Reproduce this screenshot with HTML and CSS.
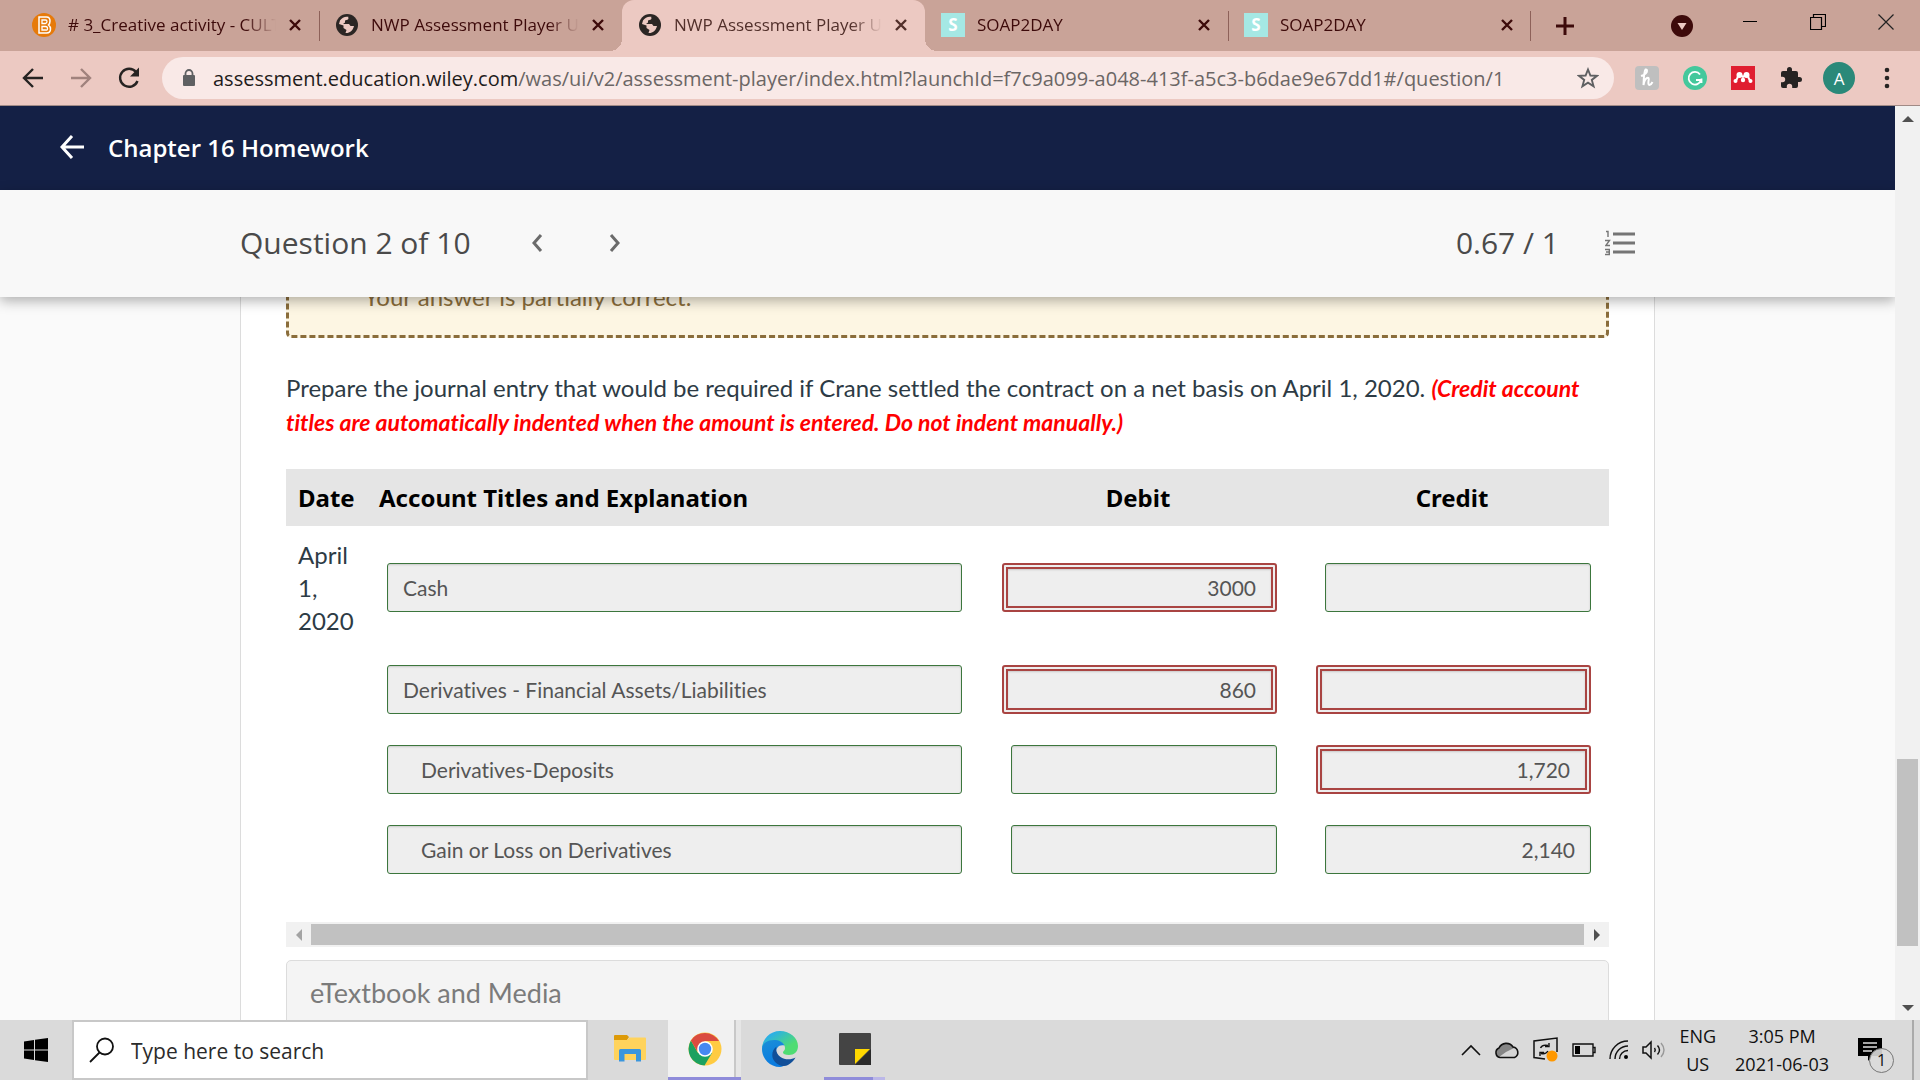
FILE: index.html
```html
<!DOCTYPE html>
<html lang="en">

<head>
    <meta charset="UTF-8">
    <meta name="viewport" content="width=device-width, initial-scale=1.0">
    <title>NWP Assessment Player UI</title>
    <link rel="stylesheet" href="styles.css">
</head>

<body>
    <svg class="defs" width="0" height="0" aria-hidden="true">
        <symbol id="globe" viewBox="0 0 22 22">
            <circle cx="11" cy="11" r="11" fill="#2b2624"/>
            <path d="M4 6.500C6 3 10 2 13 3l-1 2.500-3 1v2l-2 1.500h6l1.500 2h3.500c-1 5-5 7.500-8.500 7l1-3-3-2v-2.500L3 10z" fill="#ecc9c2"/>
            <path d="M12 3.500l2 1.500v3h4l1.500 2c0-4-3-7-6-7.500z" fill="#2b2624"/>
        </symbol>
        <symbol id="cross" viewBox="0 0 14 14">
            <path d="M2 2l10 10M12 2L2 12" stroke="currentColor" stroke-width="2.400" fill="none"/>
        </symbol>
    </svg>

    <header class="browser">
        <div class="tabs">
            <div class="tab">
                <svg class="favicon" viewBox="0 0 24 24"><circle cx="12" cy="12" r="12" fill="#e67a0a"/><path d="M7 4h7.500q3.500 0 3.500 4 0 2.500-1.500 4 2 1.500 2 4 0 4-4 4H7z" fill="none" stroke="#fff" stroke-width="1.500"/><path d="M10 7h3.500q1.500 0 1.500 1.500T13.500 10.500H10zM10 13.500h3.500q2 0 2 2t-2 1.500H10z" fill="none" stroke="#fff" stroke-width="1.300"/></svg>
                <span class="tab-title"># 3_Creative activity - CULT</span>
                <button class="tab-close" aria-label="Close tab"><svg><use href="#cross"/></svg></button>
            </div>
            <div class="tab divided before-active">
                <svg class="favicon globe"><use href="#globe"/></svg>
                <span class="tab-title">NWP Assessment Player UI</span>
                <button class="tab-close" aria-label="Close tab"><svg><use href="#cross"/></svg></button>
            </div>
            <div class="tab active">
                <svg class="favicon globe"><use href="#globe"/></svg>
                <span class="tab-title">NWP Assessment Player UI</span>
                <button class="tab-close" aria-label="Close tab"><svg><use href="#cross"/></svg></button>
            </div>
            <div class="tab after-active">
                <span class="favicon soap">S</span>
                <span class="tab-title">SOAP2DAY</span>
                <button class="tab-close" aria-label="Close tab"><svg><use href="#cross"/></svg></button>
            </div>
            <div class="tab divided last">
                <span class="favicon soap">S</span>
                <span class="tab-title">SOAP2DAY</span>
                <button class="tab-close" aria-label="Close tab"><svg><use href="#cross"/></svg></button>
            </div>
            <button class="new-tab" aria-label="New tab"><svg width="20" height="20" viewBox="0 0 20 20"><path d="M10 1v18M1 10h18" stroke="currentColor" stroke-width="3"/></svg></button>
            <div class="window-buttons">
                <button aria-label="Search tabs"><svg width="22" height="22" viewBox="0 0 22 22"><circle cx="11" cy="11" r="11" fill="#3d0a0a"/><path d="M6.500 8h9L11 15z" fill="#ecc9c2"/></svg></button>
                <button aria-label="Minimize"><svg width="16" height="16" viewBox="0 0 16 16"><path d="M1 7.500h14" stroke="#000"/></svg></button>
                <button aria-label="Restore"><svg width="16" height="16" viewBox="0 0 16 16"><path d="M.5 3.500h11v12H.5zM3.500 3.500v-3h12v12h-4" fill="none" stroke="#000" stroke-width="1.200"/></svg></button>
                <button aria-label="Close window"><svg width="16" height="16" viewBox="0 0 16 16"><path d="M.5.5l15 15M15.500.5l-15 15" stroke="#222" stroke-width="1.200"/></svg></button>
            </div>
        </div>

        <div class="toolbar">
            <button aria-label="Back"><svg width="24" height="24" viewBox="0 0 24 24"><path d="M22 12H4M12 3l-9 9 9 9" fill="none" stroke="#262322" stroke-width="2.400"/></svg></button>
            <button aria-label="Forward"><svg width="24" height="24" viewBox="0 0 24 24"><path d="M2 12h18M12 3l9 9-9 9" fill="none" stroke="#a0827d" stroke-width="2.400"/></svg></button>
            <button aria-label="Reload"><svg width="24" height="24" viewBox="0 0 24 24"><path d="M20.500 15A9 9 0 1 1 19 6" fill="none" stroke="#262322" stroke-width="2.400"/><path d="M22 1.500v9h-9z" fill="#262322"/></svg></button>
            <div class="omnibox">
                <svg width="14" height="18" viewBox="0 0 14 18"><path d="M3.500 7V4.500a3.500 3.500 0 0 1 7 0V7" fill="none" stroke="#5f6062" stroke-width="1.800"/><rect x="1" y="6" width="12" height="11" rx="1" fill="#5f6062"/></svg>
                <p class="url"><a href="#">assessment.education.wiley.com</a>/was/ui/v2/assessment-player/index.html?launchId=f7c9a099-a048-413f-a5c3-b6dae9e67dd1#/question/1</p>
                <button aria-label="Bookmark this page"><svg width="22" height="22" viewBox="0 0 22 22"><path d="M11 2.500l2.400 6 6.600.3-5.200 4.100 1.800 6.400L11 15.700l-5.600 3.600 1.800-6.400L2 8.800l6.600-.3z" fill="none" stroke="#5f6062" stroke-width="1.900"/></svg></button>
            </div>
            <div class="extensions">
                <button class="ext honey" aria-label="Honey"><svg width="24" height="24" viewBox="0 0 24 24"><rect width="24" height="24" rx="4" fill="#bfbfbf"/><path d="M6 10q6-2 6-5 0-2-1.500-1.500Q9 5 8.500 19q1-6 3.500-7t1.500 3q-.5 4 1 4t3-3" fill="none" stroke="#fff" stroke-width="2"/></svg></button>
                <button class="ext grammarly" aria-label="Grammarly"><svg width="24" height="24" viewBox="0 0 24 24"><circle cx="12" cy="12" r="12" fill="#44c89c"/><path d="M17 8.500A6.300 6.300 0 1 0 18 14h-5M18.500 12.500V17" fill="none" stroke="#fff" stroke-width="1.800"/></svg></button>
                <button class="ext" aria-label="Mendeley"><svg width="24" height="24" viewBox="0 0 24 24"><rect width="24" height="24" fill="#e01e30"/><g fill="#fff"><circle cx="8.500" cy="9" r="3"/><circle cx="15.500" cy="9" r="3"/><circle cx="4.500" cy="15" r="2"/><circle cx="12" cy="14" r="2.200"/><circle cx="19.500" cy="15" r="2"/></g><path d="M4.500 15q2-2 2.500-5M9.500 9l2.500 2 2.500-2M17 10q.5 3 2.500 5" fill="none" stroke="#fff" stroke-width="2"/></svg></button>
                <button class="ext" aria-label="Extensions"><svg width="24" height="24" viewBox="0 0 24 24"><path d="M20.500 11H19V7a2 2 0 0 0-2-2h-4V3.500a2.500 2.500 0 0 0-5 0V5H4a2 2 0 0 0-2 2v3.800h1.500a2.700 2.700 0 0 1 0 5.400H2V20a2 2 0 0 0 2 2h3.800v-1.500a2.700 2.700 0 0 1 5.400 0V22H17a2 2 0 0 0 2-2v-4h1.500a2.500 2.500 0 0 0 0-5z" fill="#262322"/></svg></button>
                <button class="avatar" aria-label="Profile">A</button>
                <button class="ext" aria-label="Menu"><svg width="24" height="24" viewBox="0 0 24 24"><g fill="#262322"><circle cx="12" cy="4" r="2.300"/><circle cx="12" cy="12" r="2.300"/><circle cx="12" cy="20" r="2.300"/></g></svg></button>
            </div>
        </div>
    </header>

    <div class="viewport">
        <div class="app">
            <div class="course-bar">
                <a href="#" aria-label="Back to course"><svg width="24" height="24" viewBox="0 0 24 24"><path d="M24 12H3M12 1L2 12l10 11" fill="none" stroke="#fff" stroke-width="3"/></svg></a>
                <h1>Chapter 16 Homework</h1>
            </div>
            <nav class="question-bar">
                <h2>Question 2 of 10</h2>
                <button class="prev" aria-label="Previous question"><svg width="12" height="18" viewBox="0 0 12 18"><path d="M10 1L3 9l7 8" fill="none" stroke="#6b6b6b" stroke-width="3"/></svg></button>
                <button class="next" aria-label="Next question"><svg width="12" height="18" viewBox="0 0 12 18"><path d="M2 1l7 8-7 8" fill="none" stroke="#6b6b6b" stroke-width="3"/></svg></button>
                <span class="score">0.67 / 1</span>
                <button aria-label="Question list"><svg width="30" height="26" viewBox="0 0 30 26"><path d="M8 4h22M8 13h22M8 22h22" stroke="#757575" stroke-width="3"/><path d="M1 1.500h2V7M0 10.500h4.500L.8 15.500H5M0 19.500h4.300v5H0M1 22h3" fill="none" stroke="#757575" stroke-width="1.400"/></svg></button>
            </nav>

            <main class="content">
                <div class="card">
                    <div class="alert">Your answer is partially correct.</div>
                    <p class="prompt">Prepare the journal entry that would be required if Crane settled the contract on a net basis on April 1, 2020. <em>(Credit account titles are automatically indented when the amount is entered. Do not indent manually.)</em></p>

                    <table class="journal">
                        <thead>
                            <tr>
                                <th class="date">Date</th>
                                <th class="account">Account Titles and Explanation</th>
                                <th class="amount">Debit</th>
                                <th class="amount">Credit</th>
                            </tr>
                        </thead>
                        <tbody>
                            <tr>
                                <td class="date">April 1, 2020</td>
                                <td class="account"><input type="text" value="Cash" aria-label="Account 1" readonly></td>
                                <td class="amount"><input type="text" class="wrong" value="3000" aria-label="Debit 1" readonly></td>
                                <td class="amount"><input type="text" value="" aria-label="Credit 1" readonly></td>
                            </tr>
                            <tr>
                                <td class="date"></td>
                                <td class="account"><input type="text" value="Derivatives - Financial Assets/Liabilities" aria-label="Account 2" readonly></td>
                                <td class="amount"><input type="text" class="wrong" value="860" aria-label="Debit 2" readonly></td>
                                <td class="amount"><input type="text" class="wrong" value="" aria-label="Credit 2" readonly></td>
                            </tr>
                            <tr>
                                <td class="date"></td>
                                <td class="account"><input type="text" class="indent" value="Derivatives-Deposits" aria-label="Account 3" readonly></td>
                                <td class="amount"><input type="text" value="" aria-label="Debit 3" readonly></td>
                                <td class="amount"><input type="text" class="wrong" value="1,720" aria-label="Credit 3" readonly></td>
                            </tr>
                            <tr>
                                <td class="date"></td>
                                <td class="account"><input type="text" class="indent" value="Gain or Loss on Derivatives" aria-label="Account 4" readonly></td>
                                <td class="amount"><input type="text" value="" aria-label="Debit 4" readonly></td>
                                <td class="amount"><input type="text" value="2,140" aria-label="Credit 4" readonly></td>
                            </tr>
                        </tbody>
                    </table>

                    <div class="scroll-x">
                        <button aria-label="Scroll left"><svg width="6" height="12" viewBox="0 0 6 12"><path d="M6 0v12L0 6z" fill="#a3a3a3"/></svg></button>
                        <div class="thumb"></div>
                        <button aria-label="Scroll right"><svg width="6" height="12" viewBox="0 0 6 12"><path d="M0 0v12l6-6z" fill="#505050"/></svg></button>
                    </div>
                    <button class="resources">eTextbook and Media</button>
                </div>
            </main>
        </div>

        <div class="scroll-y">
            <button aria-label="Scroll up"><svg width="12" height="6" viewBox="0 0 12 6"><path d="M0 6h12L6 0z" fill="#505050"/></svg></button>
            <div class="track"><div class="thumb"></div></div>
            <button aria-label="Scroll down"><svg width="12" height="6" viewBox="0 0 12 6"><path d="M0 0h12L6 6z" fill="#505050"/></svg></button>
        </div>
    </div>

    <footer class="taskbar">
        <button class="start" aria-label="Start"><svg width="24" height="24" viewBox="0 0 24 24"><path d="M0 3.500L10 2v9.500H0zM11 1.800L24 0v11.500H11zM0 12.500h10V22L0 20.500zM11 12.500h13V24l-13-1.800z"/></svg></button>
        <label class="search">
            <svg width="26" height="26" viewBox="0 0 26 26"><circle cx="16" cy="9.500" r="8" fill="none" stroke="#111" stroke-width="1.800"/><path d="M10.500 15.500L1 25" stroke="#111" stroke-width="1.800"/></svg>
            <input type="text" placeholder="Type here to search" aria-label="Search">
        </label>
        <div class="apps">
            <button aria-label="File Explorer"><svg width="32" height="27" viewBox="0 0 32 27"><path d="M0 1q0-1 1-1h12l2 2-2 3H0z" fill="#dd9a08"/><path d="M0 5h13l2.500-2.500H31q1 0 1 1V24q0 1-1 1H1q-1 0-1-1z" fill="#ffd35c"/><path d="M5 26.500V15.500q0-1.500 1.500-1.500h19q1.500 0 1.500 1.500v11h-5V19H10.500v7.500z" fill="#3a96dd"/></svg></button>
            <button class="current" aria-label="Google Chrome"><svg width="34" height="34" viewBox="0 0 34 34"><circle cx="17" cy="17" r="16.500" fill="#ffcb42"/><path d="M2.900 8.500A16.500 16.500 0 0 0 16.500 33.500L24 21l-7-4-7 4z" fill="#1ba160"/><path d="M17 9h14L24 20z" fill="#ffcb42"/><path d="M2.900 8.500A16.500 16.500 0 0 1 31 9H17L9 19z" fill="#da4b40"/><circle cx="17" cy="17" r="7.800" fill="#fff"/><circle cx="17" cy="17" r="6.200" fill="#4688f1"/></svg></button>
            <button aria-label="Microsoft Edge"><svg width="36" height="36" viewBox="0 0 36 36">
                <defs><linearGradient id="edge-top" x1="0" y1="0" x2="1" y2="1"><stop offset="0.200" stop-color="#2bb0e6"/><stop offset="0.700" stop-color="#4fdc73"/></linearGradient><linearGradient id="edge-side" x1="0" y1="0" x2="0.300" y2="1"><stop offset="0" stop-color="#1b8fd8"/><stop offset="1" stop-color="#0a7be0"/></linearGradient></defs>
                <path d="M0 18C0 8 8 0 18 0s18 7 18 15c0 6-4 9-9 9-4 0-6-1-6-2.500S23 20 23 17c0-4-4-7-9-7C7 10 1 13 0 18z" fill="url(#edge-top)"/>
                <path d="M0 18c0-6 6-9 12-9 5 0 9 2 10.500 5.500C17 13 14 17 14 21c0 7 6 11 10 12-2 2-4 3-6 3C8 36 0 28 0 18z" fill="url(#edge-side)"/>
                <path d="M14.500 15.500C10 19 9 25 12 29.500c3 5 10 7 14 4.500 3-1.500 6-4.500 7.500-7.500-4 2.500-11 2.500-15-.5-4-3-5-7-4-10.500z" fill="#114f99"/>
            </svg></button>
            <button class="open" aria-label="Sticky Notes"><svg width="32" height="32" viewBox="0 0 32 32"><rect width="32" height="32" rx="1" fill="#444"/><path d="M32 16v16H16z" fill="#2a2a2a"/><path d="M16 16h15L16 31z" fill="#ffd800"/></svg></button>
        </div>
        <div class="tray">
            <svg width="20" height="12" viewBox="0 0 20 12"><path d="M1 11l9-9 9 9" fill="none" stroke="#111" stroke-width="1.600"/></svg>
            <svg width="26" height="18" viewBox="0 0 26 18"><path d="M6 16.500a5 5 0 0 1-1-9.500 8 8 0 0 1 14-1 5.500 5.500 0 0 1 1.500 10.500z" fill="#d5d5d5"/><path d="M2 14q0-6 3-7a8 8 0 0 1 14-1l2 .5L12 11l-7 5z" fill="#858585"/><path d="M6 16.500a5 5 0 0 1-1-9.500 8 8 0 0 1 14-1 5.500 5.500 0 0 1 1.500 10.500z" fill="none" stroke="#111" stroke-width="1.600"/></svg>
            <svg width="26" height="26" viewBox="0 0 26 26"><path d="M12 22L1 20.500V4l23-3v14" fill="none" stroke="#111" stroke-width="1.500"/><path d="M7.500 11q2-4 7.500-2.500M16 6v3.500h-4M15 14q-2 3.500-7 2.500M7 19v-3.500h4" fill="none" stroke="#111" stroke-width="1.400"/><circle cx="19" cy="19" r="5.500" fill="#ff9800"/></svg>
            <svg width="24" height="14" viewBox="0 0 24 14"><path d="M1 1h20v12H1zM21.500 4.500h1.500v5h-1.500" fill="none" stroke="#111" stroke-width="1.400"/><path d="M3 3h5v8H3z"/></svg>
            <svg width="20" height="20" viewBox="0 0 20 20"><g fill="none" stroke="#111" stroke-width="1.400"><path d="M1 19A18 18 0 0 1 19 1M6 19A13 13 0 0 1 19 6M10.500 19A8.500 8.500 0 0 1 19 10.500"/></g><circle cx="17" cy="17" r="2"/></svg>
            <svg width="24" height="20" viewBox="0 0 24 20"><path d="M1 7v6h3l5 5V2L4 7z" fill="none" stroke="#111" stroke-width="1.500"/><path d="M12.500 8q1.500 2 0 4M15.500 5.500q4 4.500 0 9" fill="none" stroke="#111" stroke-width="1.400"/><path d="M19 3q6 7 0 14" fill="none" stroke="#999" stroke-width="1.400"/></svg>
            <span class="language">ENG<br>US</span>
            <span class="clock">3:05 PM<br>2021-06-03</span>
            <button class="notifications" aria-label="Notifications"><svg width="24" height="24" viewBox="0 0 24 24"><path d="M0 0h24v18H14l-4 5v-5H0z"/><path d="M5 5h14M5 9h14M5 13h9" stroke="#ddd" stroke-width="1.300"/></svg><span class="badge">1</span></button>
        </div>
        <button class="show-desktop" aria-label="Show desktop"></button>
    </footer>
</body>

</html>
```
FILE: styles.css
```css
* {
    box-sizing: border-box;
}

body {
    display: flex;
    flex-direction: column;
    height: 100vh;
    margin: 0;
    overflow: hidden;
    font-family: "Open Sans", "Noto Sans", sans-serif;
    background-color: #fafafa;
}

h1,
h2,
p {
    margin: 0;
}

button {
    display: flex;
    align-items: center;
    justify-content: center;
    flex-shrink: 0;
    padding: 0;
    border: none;
    background: none;
    font-family: inherit;
    color: inherit;
}

svg {
    display: block;
    flex-shrink: 0;
}

.defs {
    position: absolute;
}

/* browser frame */

.browser {
    flex-shrink: 0;
    border-bottom: 1px solid #a08a86;
    background-color: #ecc9c2;
}

.tabs {
    display: flex;
    height: 51px;
    padding-left: 16px;
    background-color: #c9a398;
    color: #3d0a0a;
}

.tab {
    display: flex;
    align-items: center;
    flex: 0 1 303px;
    min-width: 0;
    padding: 0 17px 2px 16px;
    font-size: 17px;
}

.tab.divided {
    background: linear-gradient(#8d6159, #8d6159) no-repeat 0 11px / 1px 30px;
}

.tab.last {
    background: linear-gradient(#8d6159, #8d6159) no-repeat 0 11px / 1px 30px, linear-gradient(#8d6159, #8d6159) no-repeat 100% 11px / 1px 30px;
}

.tab.active {
    border-radius: 12px 12px 0 0;
    background-color: #ecc9c2;
    color: #52302b;
}

.tab.before-active,
.tab.after-active {
    position: relative;
}

/* flared feet of the active tab */
.tab.before-active::after,
.tab.after-active::before {
    content: "";
    position: absolute;
    bottom: 0;
    width: 12px;
    height: 12px;
}

.tab.before-active::after {
    right: 0;
    background: radial-gradient(circle at 0 0, #c9a398 12px, #ecc9c2 12px);
}

.tab.after-active::before {
    left: 0;
    background: radial-gradient(circle at 100% 0, #c9a398 12px, #ecc9c2 12px);
}

.favicon {
    flex-shrink: 0;
    width: 24px;
    height: 24px;
    margin-right: 12px;
}

.favicon.globe {
    padding: 1px;
}

.soap {
    background-color: #a5e8e4;
    color: #fff;
    font-weight: 700;
    line-height: 24px;
    text-align: center;
}

.tab-title {
    flex: 1;
    overflow: hidden;
    white-space: nowrap;
    -webkit-mask-image: linear-gradient(90deg, #000 85%, transparent);
    mask-image: linear-gradient(90deg, #000 85%, transparent);
}

.tab-close {
    margin-left: 12px;
}

.tab-close svg {
    width: 14px;
    height: 14px;
}

.new-tab {
    margin-left: 24px;
}

.window-buttons {
    display: flex;
    margin-left: auto;
}

.window-buttons button {
    width: 68px;
    padding-bottom: 8px;
}

.window-buttons button:first-child {
    padding: 0;
}

.toolbar {
    display: flex;
    align-items: center;
    height: 54px;
    padding: 0 21px;
    gap: 24px;
}

.omnibox {
    display: flex;
    align-items: center;
    flex: 1;
    min-width: 0;
    height: 42px;
    margin: 0 -3px;
    padding: 0 15px 0 20px;
    border-radius: 21px;
    background-color: #f9e9e7;
}

.url {
    flex: 1;
    margin-left: 17px;
    overflow: hidden;
    font-size: 20px;
    white-space: nowrap;
    color: #6b6665;
}

.url a {
    color: #1f1c1b;
    text-decoration: none;
}

.extensions {
    display: flex;
    align-items: center;
    gap: 24px;
}

.avatar {
    width: 32px;
    height: 32px;
    margin: 0 -4px;
    border-radius: 50%;
    background-color: #2a8979;
    color: #fff;
    font-size: 17px;
}

/* assessment player */

.viewport {
    display: flex;
    flex: 1;
    min-height: 0;
}

.app {
    display: flex;
    flex-direction: column;
    flex: 1;
    min-width: 0;
    overflow: hidden;
}

.course-bar {
    display: flex;
    align-items: center;
    flex-shrink: 0;
    gap: 24px;
    height: 84px;
    padding: 0 60px 2px;
    background-color: #142045;
    color: #fff;
}

.course-bar h1 {
    font-size: 24px;
    font-weight: 600;
}

.question-bar {
    position: relative;
    z-index: 1;
    display: flex;
    align-items: center;
    flex-shrink: 0;
    height: 107px;
    padding: 0 260px 2px 240px;
    background-color: #f8f8f8;
    box-shadow: 0 4px 12px rgba(0, 0, 0, 0.3);
    color: #4a4a4a;
}

.question-bar h2,
.score {
    font-size: 30px;
    font-weight: 400;
}

.prev {
    margin-left: 60px;
}

.next {
    margin-left: 66px;
}

.score {
    margin: 0 46px 0 auto;
}

.content {
    flex: 1;
    min-height: 0;
    padding: 0 240px;
    overflow: hidden;
    background-color: #fafafa;
    font-family: Lato, sans-serif;
    font-variant-ligatures: none;
}

.card {
    min-height: 100%;
    padding: 0 45px;
    border: solid #dcdcdc;
    border-width: 0 1px;
    background-color: #fff;
}

.alert {
    margin-top: -50px;
    padding: 30px 75px 21px;
    border: 3px dashed #8a6d3b;
    border-radius: 5px;
    background-color: #fdf6e3;
    color: #8a6d3b;
    font-size: 24px;
    line-height: 34px;
}

.prompt {
    margin: 33px 0 30px;
    color: #2d3b45;
    font-size: 24px;
    line-height: 33px;
}

.prompt em {
    color: #f00;
    font-size: 23px;
    font-weight: 700;
}

.journal {
    width: 100%;
    border-collapse: collapse;
    table-layout: fixed;
    color: #2d3b45;
    font-size: 24px;
    line-height: 33px;
}

.journal th {
    height: 57px;
    padding: 0 12px;
    background-color: #e5e5e5;
    color: #000;
    font-family: "Noto Sans", sans-serif;
    text-align: left;
}

.journal th.amount {
    text-align: center;
}

.journal td {
    height: 80px;
    padding: 12px 18px;
}

.journal .date {
    width: 81px;
    padding-right: 0;
    padding-left: 12px;
}

.journal .amount {
    width: 314px;
}

.journal td.account {
    padding: 0 19px 0 20px;
}

.journal td.amount {
    text-align: right;
}

.journal input {
    display: inline-block;
    width: 100%;
    height: 49px;
    padding: 0 15px;
    border: 1px solid #3c763d;
    border-radius: 3px;
    background-color: #eee;
    box-shadow: inset 0 1px 2px rgba(0, 0, 0, 0.15);
    color: #555;
    font-family: inherit;
    font-size: 21px;
    font-variant-ligatures: none;
    vertical-align: middle;
}

.journal input.indent {
    padding-left: 33px;
}

.journal .amount input {
    width: 266px;
    text-align: right;
}

.journal .amount input.wrong {
    width: 275px;
    border: 6px double #a94442;
}

/* scroll bars */

.scroll-x {
    display: flex;
    height: 25px;
    margin-top: 33px;
    background-color: #f1f1f1;
}

.scroll-x button {
    width: 25px;
}

.scroll-x .thumb {
    flex: 1;
    margin: 2px 0;
    background-color: #c1c1c1;
}

.scroll-y {
    display: flex;
    flex-direction: column;
    width: 25px;
    background-color: #f1f1f1;
}

.scroll-y button {
    height: 25px;
}

.scroll-y .track {
    display: flex;
    flex-direction: column;
    justify-content: flex-end;
    flex: 1;
    padding: 0 2px 49px;
}

.scroll-y .thumb {
    height: 23%;
    background-color: #c1c1c1;
}

.resources {
    width: 100%;
    height: 66px;
    margin-top: 13px;
    padding: 0 23px 2px;
    justify-content: flex-start;
    border: 1px solid #dcdcdc;
    border-radius: 5px 5px 0 0;
    background-color: #f4f4f4;
    color: #7b7b7b;
    font-size: 27px;
}

/* windows taskbar */

.taskbar {
    display: flex;
    flex-shrink: 0;
    height: 60px;
    background-color: #dadada;
    color: #111;
}

.start {
    width: 72px;
}

.search {
    display: flex;
    align-items: center;
    width: 516px;
    padding-left: 15px;
    border: 2px solid #c8c8c8;
    background-color: #fff;
}

.search input {
    flex: 1;
    min-width: 0;
    padding: 2px 16px 0;
    border: none;
    background: none;
    font-family: inherit;
    font-size: 21px;
}

.search input::placeholder {
    color: #2b2b2b;
}

.apps {
    display: flex;
    padding-left: 5px;
}

.apps button {
    width: 73px;
    margin-right: 2px;
    border-bottom: 3px solid transparent;
}

.apps .current {
    border-bottom-color: #8f8cda;
    background: linear-gradient(90deg, #f1f1f1 66px, #c8c8c8 66px, #c8c8c8 68px, #e6e6e6 68px);
}

.apps .open {
    background: linear-gradient(90deg, #8f8cda 49px, #bbb7e8 49px) no-repeat 6px 100% / 61px 3px border-box;
}

.tray {
    display: flex;
    align-items: center;
    margin-left: auto;
    padding-right: 18px;
    gap: 13px;
    font-size: 18px;
    line-height: 28px;
    text-align: center;
}

.clock {
    margin-left: 6px;
}

.notifications {
    position: relative;
    margin-left: 16px;
    padding-right: 12px;
}

.badge {
    position: absolute;
    top: 10px;
    left: 11px;
    width: 25px;
    height: 25px;
    border: 1px solid #777;
    border-radius: 50%;
    background-color: rgba(218, 218, 218, 0.9);
    font-size: 16px;
    line-height: 23px;
}

.show-desktop {
    width: 8px;
    border-left: 2px solid #aaa;
}
```
